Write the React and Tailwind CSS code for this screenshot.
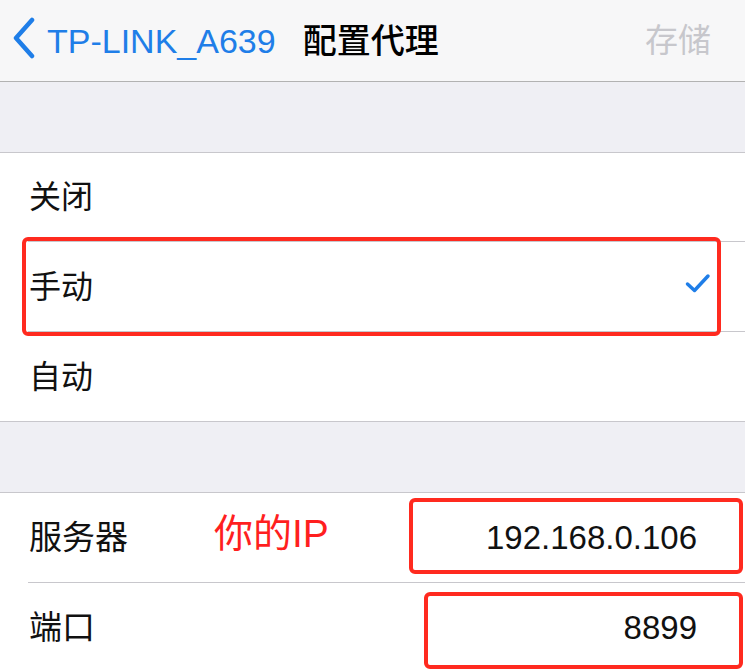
export default function App() {
  const font = { fontFamily: '"Liberation Sans", "Noto Sans CJK SC", sans-serif' }

  return (
    <div style={font} className="relative w-[745px] h-[671px] overflow-hidden bg-white text-[#111]">
      {/* Nav bar */}
      <div className="h-[81px] bg-[#f7f7f8] flex items-center">
        <svg width="26" height="42" viewBox="0 0 26 42" className="ml-[11px] mt-[-6px]">
          <path d="M21 3 L5 21 L21 39" fill="none" stroke="#1f7ee8" strokeWidth="4.5" strokeLinecap="round" strokeLinejoin="round" />
        </svg>
        <span className="ml-[10px] text-[34px] text-[#1f7ee8] leading-none">TP-LINK_A639</span>
        <span className="ml-[27px] text-[34px] font-medium leading-none text-black">配置代理</span>
        <span className="ml-auto mr-[34px] text-[33px] leading-none text-[#c7c7cc]">存储</span>
      </div>
      <div className="h-px bg-[#b2b2b2]" />
      <div className="h-[70px] bg-[#efeff4]" />
      <div className="h-px bg-[#c8c7cc]" />

      {/* Proxy mode */}
      <div className="h-[88px] flex items-center pl-[29px] text-[32px]">关闭</div>
      <div className="h-px bg-[#c8c7cc] ml-[28px]" />
      <div className="h-[89px] flex items-center pl-[29px] text-[32px]">
        <span>手动</span>
        <svg width="26" height="21" viewBox="0 0 26 21" className="ml-auto mr-[34px] mt-[-6px]">
          <path d="M2.5 11 L9.5 17.5 L23 3" fill="none" stroke="#1f7ee8" strokeWidth="3.5" strokeLinecap="round" strokeLinejoin="round" />
        </svg>
      </div>
      <div className="h-px bg-[#c8c7cc] ml-[28px]" />
      <div className="h-[89px] flex items-center pl-[29px] text-[32px]">自动</div>
      <div className="h-px bg-[#c8c7cc]" />
      <div className="h-[70px] bg-[#efeff4]" />
      <div className="h-px bg-[#c8c7cc]" />

      {/* Server settings */}
      <div className="h-[89px] flex items-center pl-[29px] text-[33px]">
        <span className="w-[102px]">服务器</span>
        <span className="ml-[83px] mt-[-6px] text-[39px] text-[#ff1f1f]">你的IP</span>
        <span className="ml-auto mr-[48px]">192.168.0.106</span>
      </div>
      <div className="h-px bg-[#c8c7cc] ml-[28px]" />
      <div className="h-[89px] flex items-center pl-[29px] text-[33px]">
        <span>端口</span>
        <span className="ml-auto mr-[48px]">8899</span>
      </div>

      {/* Annotation boxes */}
      <div className="absolute left-[22px] top-[237px] w-[699px] h-[99px] border-4 border-[#ff2a1f] rounded-[6px]" />
      <div className="absolute left-[409px] top-[498px] w-[334px] h-[76px] border-4 border-[#ff2a1f] rounded-[6px]" />
      <div className="absolute left-[424px] top-[592px] w-[319px] h-[77px] border-4 border-[#ff2a1f] rounded-[6px]" />
    </div>
  )
}
